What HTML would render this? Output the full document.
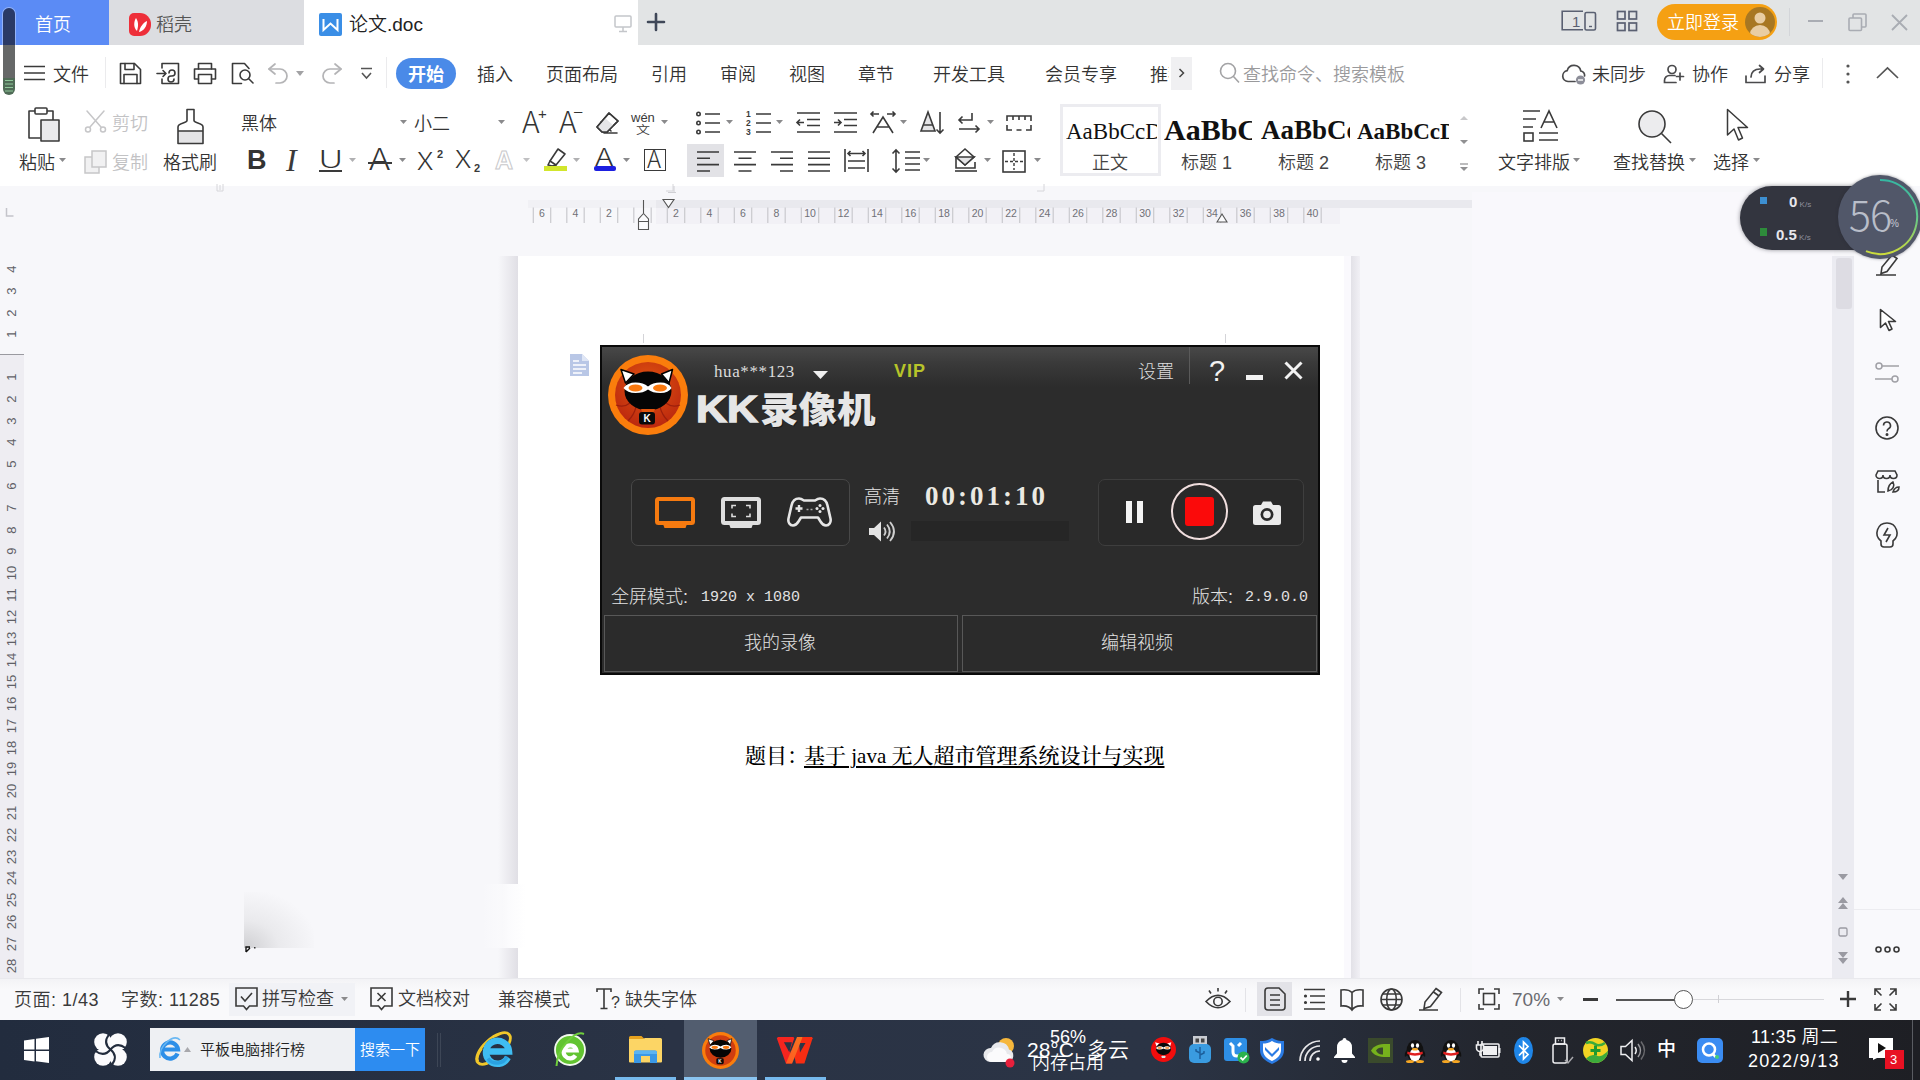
<!DOCTYPE html>
<html lang="zh-CN">
<head>
<meta charset="utf-8">
<title>论文.doc - WPS</title>
<style>
*{box-sizing:border-box;margin:0;padding:0}
html,body{width:1920px;height:1080px;overflow:hidden;background:#f7f7fa}
body{position:relative;font-family:"Liberation Sans","Noto Sans CJK SC",sans-serif;color:#333;font-size:18px;line-height:1;font-weight:350}
.a{position:absolute}
.t{position:absolute;white-space:nowrap;line-height:1}
svg{position:absolute;overflow:visible}
.ic{fill:none;stroke:#3a3a3a;stroke-width:1.6;stroke-linecap:round;stroke-linejoin:round}
/* regions */
#titlebar{left:0;top:0;width:1920px;height:45px;background:#e2e4e5}
#menurow{left:0;top:45px;width:1920px;height:55px;background:#fff}
#ribbon{left:0;top:100px;width:1920px;height:92px;background:#fff}
#docarea{left:0;top:186px;width:1920px;height:792px;background:#f7f7fa}
#statusbar{left:0;top:978px;width:1920px;height:42px;background:linear-gradient(180deg,#f3f3f6,#f9f9fb 25%);border-top:1px solid #e9e9ed}
#taskbar{left:0;top:1020px;width:1920px;height:60px;background:linear-gradient(90deg,#222c3e 0%,#2a3345 35%,#2b3445 60%,#23262e 78%,#1e1f24 100%)}
</style>
</head>
<body>
<div id="titlebar" class="a"></div>
<div id="menurow" class="a"></div>
<div id="ribbon" class="a"></div>
<div id="docarea" class="a"></div>
<div id="statusbar" class="a"></div>
<div id="taskbar" class="a"></div>
<!--TITLEBAR-->
<!-- title bar -->
<div class="a" style="left:0;top:0;width:109px;height:45px;background:#5b8bf5"></div>
<div class="t" style="left:35px;top:16px;font-size:18px;color:#fff">首页</div>
<div class="a" style="left:109px;top:0;width:195px;height:45px;background:#dcdde1"></div>
<div class="a" style="left:129px;top:13px;width:22px;height:23px;background:#ee2f3a;border-radius:5px 11px 11px 5px"></div>
<svg style="left:129px;top:13px" width="22" height="23" viewBox="0 0 22 23"><path d="M8 18 C4 14 5 8 7 5 C9 8 10 12 8 18 Z M10 19 C11 14 14 10 18 8 C18 13 15 18 10 19 Z" fill="#fff"/></svg>
<div class="t" style="left:156px;top:16px;font-size:18px;color:#555">稻壳</div>
<div class="a" style="left:304px;top:0;width:334px;height:46px;background:#fff;border-radius:0 0 0 0"></div>
<div class="a" style="left:319px;top:13px;width:23px;height:23px;background:#3a8ee6;border-radius:2px"></div>
<svg style="left:319px;top:13px" width="23" height="23" viewBox="0 0 23 23"><path d="M4.5 6 L4.5 17 L11.5 10.5 L18.5 17 L18.5 6" fill="none" stroke="#fff" stroke-width="2" stroke-linejoin="miter"/></svg>
<div class="t" style="left:349px;top:15px;font-size:19px;color:#222">论文.doc</div>
<svg style="left:614px;top:15px" width="18" height="18" viewBox="0 0 18 18"><rect x="1" y="1" width="16" height="11" rx="1" fill="none" stroke="#c4c6ca" stroke-width="1.5"/><path d="M9 12v4M5 16.5h8" stroke="#c4c6ca" stroke-width="1.5"/></svg>
<svg style="left:647px;top:13px" width="18" height="18" viewBox="0 0 18 18"><path d="M9 1v16M1 9h16" stroke="#3f4758" stroke-width="2.6" stroke-linecap="round"/></svg>
<svg style="left:1561px;top:10px" width="36" height="22" viewBox="0 0 36 22"><path d="M22 1.2H1.2v18.6H22" fill="none" stroke="#5a6072" stroke-width="1.6"/><rect x="24" y="2.5" width="10.5" height="17.5" rx="1.5" fill="none" stroke="#5a6072" stroke-width="1.6"/><path d="M28 16.5h3" stroke="#5a6072" stroke-width="1.4"/><text x="11" y="16.5" font-size="15" fill="#5a6072" font-family="Liberation Sans, sans-serif">1</text></svg>
<svg style="left:1616px;top:10px" width="22" height="22" viewBox="0 0 22 22" fill="none" stroke="#5a6072" stroke-width="1.7"><rect x="1.5" y="1.5" width="7.5" height="7.5"/><rect x="13" y="1.5" width="7.5" height="7.5"/><rect x="1.5" y="13" width="7.5" height="7.5"/><rect x="13" y="13" width="7.5" height="7.5"/></svg>
<div class="a" style="left:1657px;top:4px;width:120px;height:36px;background:#f5a013;border-radius:18px"></div>
<div class="t" style="left:1667px;top:14px;font-size:18px;color:#fff">立即登录</div>
<svg style="left:1745px;top:7px" width="30" height="30" viewBox="0 0 30 30"><defs><clipPath id="avc"><circle cx="15" cy="15" r="15"/></clipPath></defs><circle cx="15" cy="15" r="15" fill="#a87722"/><g clip-path="url(#avc)" fill="#e9cda3"><circle cx="15" cy="11" r="5.5"/><ellipse cx="15" cy="27" rx="10" ry="9"/></g></svg>
<div class="a" style="left:1789px;top:8px;width:1px;height:28px;background:#d3d5d9"></div>
<div class="a" style="left:1808px;top:20px;width:15px;height:2px;background:#a9acb3"></div>
<svg style="left:1848px;top:13px" width="19" height="19" viewBox="0 0 19 19" fill="none" stroke="#a9acb3" stroke-width="1.6"><rect x="1" y="5" width="12.5" height="12.5" rx="1"/><path d="M5 5V2a1 1 0 0 1 1-1h11a1 1 0 0 1 1 1v11a1 1 0 0 1-1 1h-3"/></svg>
<svg style="left:1891px;top:14px" width="17" height="17" viewBox="0 0 17 17"><path d="M1 1l15 15M16 1L1 16" stroke="#a9acb3" stroke-width="1.8"/></svg>

<!--MENUROW-->
<!-- menu row -->
<svg style="left:24px;top:65px" width="21" height="16" viewBox="0 0 21 16"><path d="M0 1.5h21M0 8h21M0 14.5h21" stroke="#3a3a3a" stroke-width="1.7"/></svg>
<div class="t" style="left:53px;top:66px;font-size:18px;color:#333">文件</div>
<div class="a" style="left:105px;top:57px;width:1px;height:31px;background:#ebebed"></div>
<!-- save -->
<svg class="ic" style="left:119px;top:62px" width="23" height="23" viewBox="0 0 23 23"><path d="M1.5 1.5h14l6 6v14h-20z"/><path d="M6 1.5v6h9v-6M5 21.5v-9h13v9"/></svg>
<!-- export -->
<svg class="ic" style="left:156px;top:62px" width="24" height="23" viewBox="0 0 24 23"><path d="M6 6V1.5h16.5v20H6V17"/><path d="M1 11.5h9M7 8.5l3 3-3 3"/><path d="M13 11a3 3 0 1 1 3 3h-1a3 3 0 1 0 3 3"/></svg>
<!-- print -->
<svg class="ic" style="left:193px;top:62px" width="24" height="23" viewBox="0 0 24 23"><path d="M5.5 7V1.5h13V7"/><path d="M5.5 17H1.5V7h21v10h-4"/><path d="M5.5 12.5h13v9h-13z"/></svg>
<!-- preview -->
<svg class="ic" style="left:231px;top:62px" width="24" height="23" viewBox="0 0 24 23"><path d="M18 6.5 13.5 1.5H1.5v20h9"/><circle cx="14" cy="13" r="5"/><path d="M18 17l4 4"/></svg>
<!-- undo -->
<svg style="left:267px;top:62px" width="24" height="22" viewBox="0 0 24 22" fill="none" stroke="#b4b4b6" stroke-width="1.7" stroke-linecap="round" stroke-linejoin="round"><path d="M8 2 2 7l6 5"/><path d="M2 7h11a7 7 0 0 1 0 14H9"/></svg>
<svg style="left:296px;top:71px" width="8" height="5" viewBox="0 0 8 5"><path d="M0 0h8L4 5z" fill="#a2a2a4"/></svg>
<!-- redo -->
<svg style="left:319px;top:62px" width="24" height="22" viewBox="0 0 24 22" fill="none" stroke="#b4b4b6" stroke-width="1.7" stroke-linecap="round" stroke-linejoin="round"><path d="M16 2l6 5-6 5"/><path d="M22 7H11a7 7 0 0 0 0 14h4"/></svg>
<!-- more -->
<svg style="left:360px;top:67px" width="13" height="13" viewBox="0 0 13 13" fill="none" stroke="#555" stroke-width="1.6"><path d="M1 1.5h11M2 6l4.5 5L11 6"/></svg>
<div class="a" style="left:386px;top:57px;width:1px;height:31px;background:#ebebed"></div>
<div class="a" style="left:396px;top:58px;width:60px;height:31px;background:#4a8ae8;border-radius:16px"></div>
<div class="t" style="left:408px;top:66px;font-size:18px;color:#fff;font-weight:700">开始</div>
<div class="t" style="left:477px;top:66px;font-size:18px">插入</div>
<div class="t" style="left:546px;top:66px;font-size:18px">页面布局</div>
<div class="t" style="left:651px;top:66px;font-size:18px">引用</div>
<div class="t" style="left:720px;top:66px;font-size:18px">审阅</div>
<div class="t" style="left:789px;top:66px;font-size:18px">视图</div>
<div class="t" style="left:858px;top:66px;font-size:18px">章节</div>
<div class="t" style="left:933px;top:66px;font-size:18px">开发工具</div>
<div class="t" style="left:1045px;top:66px;font-size:18px">会员专享</div>
<div class="t" style="left:1150px;top:66px;font-size:18px;width:19px;overflow:hidden">推荐</div>
<div class="a" style="left:1171px;top:57px;width:21px;height:33px;background:#f0f0f2"></div>
<svg style="left:1178px;top:68px" width="7" height="10" viewBox="0 0 7 10"><path d="M1.5 1l4 4-4 4" fill="none" stroke="#444" stroke-width="1.5"/></svg>
<svg style="left:1219px;top:62px" width="22" height="22" viewBox="0 0 22 22" fill="none" stroke="#a3a3a5" stroke-width="1.6"><circle cx="9" cy="9" r="7.5"/><path d="M14.5 14.5 20 20.5"/></svg>
<div class="t" style="left:1243px;top:66px;font-size:18px;color:#9a9a9c">查找命令、搜索模板</div>
<!-- right side of menu -->
<svg style="left:1561px;top:63px" width="26" height="22" viewBox="0 0 26 22"><path d="M14 18.5H7a5.5 5.5 0 0 1-.8-10.9A7 7 0 0 1 19.8 8 4.8 4.8 0 0 1 23.6 13" fill="none" stroke="#4a4a4c" stroke-width="1.7" stroke-linecap="round"/><circle cx="19.5" cy="17" r="4.6" fill="#8d8e99"/><path d="M17 17h5" stroke="#fff" stroke-width="1.4"/></svg>
<div class="t" style="left:1592px;top:66px;font-size:18px">未同步</div>
<svg style="left:1663px;top:64px" width="22" height="20" viewBox="0 0 22 20" fill="none" stroke="#4a4a4c" stroke-width="1.7" stroke-linecap="round"><circle cx="9" cy="5.5" r="4"/><path d="M12 11.5H6.5A5 5 0 0 0 1.5 16.5V18.5H13"/><path d="M17 9v7M13.5 12.5h7"/></svg>
<div class="t" style="left:1692px;top:66px;font-size:18px">协作</div>
<svg style="left:1744px;top:64px" width="23" height="20" viewBox="0 0 23 20" fill="none" stroke="#4a4a4c" stroke-width="1.7" stroke-linecap="round" stroke-linejoin="round"><path d="M2 12v6.5h19V12"/><path d="M7 13c0-5 3.500-8 9-8h3M15.500 1.500 19.500 5l-4 3.500"/></svg>
<div class="t" style="left:1774px;top:66px;font-size:18px">分享</div>
<div class="a" style="left:1822px;top:58px;width:1px;height:30px;background:#ebebed"></div>
<svg style="left:1846px;top:64px" width="4" height="20" viewBox="0 0 4 20" fill="#555"><circle cx="2" cy="2" r="1.6"/><circle cx="2" cy="10" r="1.6"/><circle cx="2" cy="18" r="1.6"/></svg>
<svg style="left:1876px;top:67px" width="23" height="12" viewBox="0 0 23 12"><path d="M1 11 11.5 1 22 11" fill="none" stroke="#555" stroke-width="1.7"/></svg>

<!--RIBBON-->
<!-- ribbon: clipboard -->
<svg class="ic" style="left:27px;top:107px" width="34" height="36" viewBox="0 0 34 36"><path d="M8 4H2v27h11"/><path d="M20 4h6v9"/><rect x="8" y="1" width="12" height="6" rx="1" fill="#fff"/><rect x="14" y="13" width="18" height="21" fill="#e9e9eb"/></svg>
<div class="t" style="left:19px;top:154px;font-size:18px">粘贴</div>
<svg style="left:59px;top:158px" width="7" height="4" viewBox="0 0 7 4"><path d="M0 0h7L3.500 4z" fill="#8a8a8c"/></svg>

<svg style="left:84px;top:110px" width="23" height="23" viewBox="0 0 23 23" fill="none" stroke="#c6c6c8" stroke-width="1.5" stroke-linecap="round"><path d="M3 1l14 16M20 1 6 17"/><circle cx="4" cy="19.500" r="2.500"/><circle cx="19" cy="19.500" r="2.500"/></svg>
<div class="t" style="left:112px;top:115px;font-size:18px;color:#c2c2c4">剪切</div>
<svg style="left:84px;top:150px" width="23" height="24" viewBox="0 0 23 24" fill="#f1f1f2" stroke="#c6c6c8" stroke-width="1.5"><rect x="1" y="7" width="14" height="16"/><rect x="8" y="1" width="14" height="16"/></svg>
<div class="t" style="left:112px;top:154px;font-size:18px;color:#c2c2c4">复制</div>
<svg class="ic" style="left:176px;top:108px" width="29" height="37" viewBox="0 0 29 37"><path d="M2 23h25v12.500H2z" fill="#e4e4e6" stroke="none"/><path d="M11 1.500h7v11c0 3 9 2 9 6.500v16.500H2V19c0-4.500 9-3.500 9-6.500zM2 23h25"/></svg>
<div class="t" style="left:163px;top:154px;font-size:18px">格式刷</div>
<!-- font -->
<div class="t" style="left:241px;top:115px;font-size:18px">黑体</div>
<svg style="left:400px;top:120px" width="7" height="4" viewBox="0 0 7 4"><path d="M0 0h7L3.500 4z" fill="#8a8a8c"/></svg>

<div class="t" style="left:414px;top:115px;font-size:18px">小二</div>
<svg style="left:498px;top:120px" width="7" height="4" viewBox="0 0 7 4"><path d="M0 0h7L3.500 4z" fill="#8a8a8c"/></svg>

<div class="t" style="left:247px;top:147px;font-size:27px;font-weight:700;color:#333;font-family:'Liberation Sans',sans-serif">B</div>
<div class="t" style="left:286px;top:144px;font-size:32px;font-style:italic;color:#3a3a3a;font-family:'Liberation Serif',serif">I</div>
<div class="t" style="left:318px;top:145px;font-size:25px;font-family:'Noto Sans CJK SC',sans-serif;font-weight:300;color:#333;transform:scaleX(1.45);transform-origin:0 0">U</div><div class="a" style="left:319px;top:170px;width:23px;height:1.600px;background:#3a3a3a"></div>
<svg style="left:349px;top:158px" width="7" height="4" viewBox="0 0 7 4"><path d="M0 0h7L3.500 4z" fill="#b0b0b2"/></svg>

<div class="t" style="left:369px;top:142px;font-size:30px;font-family:'Noto Sans CJK SC',sans-serif;font-weight:300;color:#333;transform:scaleX(1.2);transform-origin:0 0">A</div><div class="a" style="left:368px;top:162px;width:24px;height:1.600px;background:#3a3a3a"></div>
<svg style="left:399px;top:158px" width="7" height="4" viewBox="0 0 7 4"><path d="M0 0h7L3.500 4z" fill="#8a8a8c"/></svg>

<div class="t" style="left:417px;top:147px;font-size:25px;font-family:'Noto Sans CJK SC',sans-serif;font-weight:300;color:#333;transform:scaleX(1.2);transform-origin:0 0">X</div><div class="t" style="left:437px;top:149px;font-size:11px;font-weight:700;color:#3a3a3a;font-family:'Liberation Sans',sans-serif">2</div>
<div class="t" style="left:455px;top:145px;font-size:25px;font-family:'Noto Sans CJK SC',sans-serif;font-weight:300;color:#333;transform:scaleX(1.2);transform-origin:0 0">X</div><div class="t" style="left:474px;top:163px;font-size:11px;font-weight:700;color:#3a3a3a;font-family:'Liberation Sans',sans-serif">2</div>
<!-- font row 1 right -->
<div class="t" style="left:522px;top:105px;font-size:30px;font-family:'Noto Sans CJK SC',sans-serif;font-weight:300;color:#333">A</div><div class="t" style="left:538px;top:106px;font-size:15px;color:#333;font-family:'Liberation Sans',sans-serif">+</div>
<div class="t" style="left:559px;top:105px;font-size:30px;font-family:'Noto Sans CJK SC',sans-serif;font-weight:300;color:#333">A</div><div class="t" style="left:574px;top:103px;font-size:15px;color:#333;font-family:'Liberation Sans',sans-serif">–</div>
<svg class="ic" style="left:595px;top:111px" width="25" height="23" viewBox="0 0 25 23"><path d="M14 2 23 10 12 21H7l-5-5z" fill="#fff"/><path d="M6 11l10 9" /><path d="M10 7l9 8-7 6H8l-5-5z" fill="#e6e6e8" stroke="none"/><path d="M14 2 23 10 12 21H7l-5-5zM9 22h13"/></svg>
<div class="t" style="left:631px;top:111px;font-size:13px;font-weight:400;color:#3a3a3a;font-family:'Liberation Sans',sans-serif;letter-spacing:0">wén</div>
<div class="t" style="left:636px;top:124px;font-size:14px;color:#3a3a3a;transform:scaleY(.85);transform-origin:0 0">文</div>
<svg style="left:661px;top:120px" width="7" height="4" viewBox="0 0 7 4"><path d="M0 0h7L3.500 4z" fill="#8a8a8c"/></svg>

<!-- font row 2 right -->
<div class="t" style="left:495px;top:148px;font-size:25px;font-weight:700;color:#fff;-webkit-text-stroke:1px #c9c9cb;font-family:'Liberation Sans',sans-serif">A</div>
<svg style="left:523px;top:158px" width="7" height="4" viewBox="0 0 7 4"><path d="M0 0h7L3.500 4z" fill="#c0c0c2"/></svg>

<svg class="ic" style="left:544px;top:148px" width="24" height="23" viewBox="0 0 24 23"><path d="M14 1l7 5-9 11-6-4z"/><path d="M6 13l-2 4 4 1 4-1"/><rect x="0" y="18" width="23" height="5" fill="#d2e62c" stroke="none"/></svg>
<svg style="left:573px;top:158px" width="7" height="4" viewBox="0 0 7 4"><path d="M0 0h7L3.500 4z" fill="#b0b0b2"/></svg>

<div class="t" style="left:595px;top:144px;transform:scaleX(1.3);transform-origin:0 0;font-size:24px;font-family:'Noto Sans CJK SC',sans-serif;font-weight:300;color:#333">A</div><div class="a" style="left:594px;top:166px;width:22px;height:4.500px;background:#1d1fe0;border-radius:2px"></div>
<svg style="left:623px;top:158px" width="7" height="4" viewBox="0 0 7 4"><path d="M0 0h7L3.500 4z" fill="#8a8a8c"/></svg>

<div class="a" style="left:644px;top:149px;width:22px;height:22px;border:1.500px solid #3a3a3a"></div><div class="t" style="left:647px;top:146px;font-size:24px;font-family:'Noto Sans CJK SC',sans-serif;font-weight:300;color:#333">A</div>


<!-- paragraph row 1 -->
<svg style="left:696px;top:111px" width="25" height="24" viewBox="0 0 25 24" fill="none" stroke="#3a3a3a" stroke-width="1.600"><circle cx="2.500" cy="3" r="1.700"/><circle cx="2.500" cy="12" r="1.700"/><circle cx="2.500" cy="21" r="1.700"/><path d="M9 3h15M9 12h15M9 21h15"/></svg>
<svg style="left:726px;top:120px" width="7" height="4" viewBox="0 0 7 4"><path d="M0 0h7L3.500 4z" fill="#8a8a8c"/></svg>

<svg style="left:746px;top:109px" width="25" height="27" viewBox="0 0 25 27"><path d="M10 5h15M10 14h15M10 23h15" fill="none" stroke="#3a3a3a" stroke-width="1.600"/><text x="0" y="8" font-size="8.500" font-weight="700" fill="#3a3a3a" font-family="Liberation Sans, sans-serif">1</text><text x="0" y="17" font-size="8.500" font-weight="700" fill="#3a3a3a" font-family="Liberation Sans, sans-serif">2</text><text x="0" y="26" font-size="8.500" font-weight="700" fill="#3a3a3a" font-family="Liberation Sans, sans-serif">3</text></svg>
<svg style="left:776px;top:120px" width="7" height="4" viewBox="0 0 7 4"><path d="M0 0h7L3.500 4z" fill="#8a8a8c"/></svg>

<svg style="left:796px;top:112px" width="25" height="21" viewBox="0 0 25 21" fill="none" stroke="#3a3a3a" stroke-width="1.600"><path d="M1 1h23M11 7.500h13M11 13.500h13M1 20h23M8 10.500H1M4 7.500l-3 3 3 3"/></svg>
<svg style="left:833px;top:112px" width="25" height="21" viewBox="0 0 25 21" fill="none" stroke="#3a3a3a" stroke-width="1.600"><path d="M1 1h23M11 7.500h13M11 13.500h13M1 20h23M1 10.500h7M5 7.500l3 3-3 3"/></svg>
<svg style="left:870px;top:111px" width="26" height="23" viewBox="0 0 26 23" fill="none" stroke="#3a3a3a" stroke-width="1.600"><path d="M1 3h8M3.500 .500 1 3l2.500 2.500M25 3h-8M22.500 .500 25 3l-2.500 2.500M3 22 13 6l10 16M7 16h12"/></svg>
<svg style="left:900px;top:120px" width="7" height="4" viewBox="0 0 7 4"><path d="M0 0h7L3.500 4z" fill="#8a8a8c"/></svg>

<svg style="left:920px;top:111px" width="25" height="24" viewBox="0 0 25 24" fill="none" stroke="#3a3a3a" stroke-width="1.600"><path d="M1 20 8 1l7 19z" fill="#e4e4e6"/><path d="M3.500 14h9M20 1v21M16.500 18.500 20 22l3.500-3.500"/></svg>
<svg style="left:958px;top:112px" width="23" height="22" viewBox="0 0 23 22" fill="none" stroke="#3a3a3a" stroke-width="1.600"><path d="M14 1v7H1M4.500 4.500 1 8l3.500 3.500M1 17h20M17.500 13.500 21 17l-3.500 3.500"/></svg>
<svg style="left:987px;top:120px" width="7" height="4" viewBox="0 0 7 4"><path d="M0 0h7L3.500 4z" fill="#8a8a8c"/></svg>

<svg style="left:1006px;top:115px" width="26" height="16" viewBox="0 0 26 16" fill="none" stroke="#3a3a3a" stroke-width="1.600"><path d="M1 6V1h24v5M7 1v4M13 1v4M19 1v4M1 10v5h5M10.500 15h5M20 15h5v-5"/></svg>
<!-- paragraph row 2 -->
<div class="a" style="left:687px;top:144px;width:37px;height:33px;background:#e2e2e6"></div>
<svg style="left:697px;top:151px" width="22" height="21" viewBox="0 0 22 21" fill="none" stroke="#3a3a3a" stroke-width="1.600"><path d="M0 1h22M0 7.300h13M0 13.600h22M0 20h13"/></svg>
<svg style="left:734px;top:151px" width="22" height="21" viewBox="0 0 22 21" fill="none" stroke="#3a3a3a" stroke-width="1.600"><path d="M0 1h22M4.500 7.300h13M0 13.600h22M4.500 20h13"/></svg>
<svg style="left:771px;top:151px" width="22" height="21" viewBox="0 0 22 21" fill="none" stroke="#3a3a3a" stroke-width="1.600"><path d="M0 1h22M9 7.300h13M0 13.600h22M9 20h13"/></svg>
<svg style="left:808px;top:151px" width="22" height="21" viewBox="0 0 22 21" fill="none" stroke="#3a3a3a" stroke-width="1.600"><path d="M0 1h22M0 7.300h22M0 13.600h22M0 20h22"/></svg>
<svg style="left:844px;top:149px" width="25" height="23" viewBox="0 0 25 23" fill="none" stroke="#3a3a3a" stroke-width="1.600"><path d="M1 0v23M24 0v23M4 4.500h17M6.500 2 4 4.500 6.500 7M18.500 2 21 4.500 18.500 7M4 12h17M4 19h17"/></svg>
<svg style="left:891px;top:149px" width="30" height="24" viewBox="0 0 30 24" fill="none" stroke="#3a3a3a" stroke-width="1.600"><path d="M5 1v22M1.500 4.500 5 1l3.500 3.500M1.500 19.500 5 23l3.500-3.500M14 3h15M14 9h15M14 15h15M14 21h15"/></svg>
<svg style="left:923px;top:158px" width="7" height="4" viewBox="0 0 7 4"><path d="M0 0h7L3.500 4z" fill="#8a8a8c"/></svg>

<svg style="left:953px;top:148px" width="25" height="24" viewBox="0 0 25 24" fill="none" stroke="#3a3a3a" stroke-width="1.600"><path d="M3 9 12 1l9 8-9 8z" fill="#fff"/><path d="M3 9h18l-9 8z" fill="#e4e4e6"/><path d="M3 9v11h19v-6"/><path d="M2 23h22" /></svg>
<svg style="left:984px;top:158px" width="7" height="4" viewBox="0 0 7 4"><path d="M0 0h7L3.500 4z" fill="#8a8a8c"/></svg>

<svg style="left:1002px;top:150px" width="24" height="23" viewBox="0 0 24 23" fill="none" stroke="#3a3a3a"><rect x="1" y="1" width="22" height="21" stroke-width="1.600"/><path d="M12 3v17M3 11.500h18" stroke-width="1.400" stroke-dasharray="3 2"/></svg>
<svg style="left:1034px;top:158px" width="7" height="4" viewBox="0 0 7 4"><path d="M0 0h7L3.500 4z" fill="#8a8a8c"/></svg>

<!-- style gallery -->
<div class="a" style="left:1060px;top:104px;width:101px;height:72px;border:3px solid #ececf0;background:#fff"></div>
<div class="t" style="left:1066px;top:120px;font-size:23px;color:#111;font-family:'Liberation Serif',serif;width:91px;overflow:hidden">AaBbCcDd</div>
<div class="t" style="left:1092px;top:154px;font-size:18px;color:#444">正文</div>
<div class="t" style="left:1164px;top:115px;font-size:30px;font-weight:700;color:#111;font-family:'Liberation Serif',serif;width:88px;overflow:hidden">AaBbCc</div>
<div class="t" style="left:1181px;top:154px;font-size:18px;color:#444">标题 1</div>
<div class="t" style="left:1261px;top:117px;font-size:27px;font-weight:700;color:#111;font-family:'Liberation Serif',serif;width:89px;overflow:hidden">AaBbCc</div>
<div class="t" style="left:1278px;top:154px;font-size:18px;color:#444">标题 2</div>
<div class="t" style="left:1357px;top:120px;font-size:23px;font-weight:700;color:#111;font-family:'Liberation Serif',serif;width:92px;overflow:hidden">AaBbCcD</div>
<div class="t" style="left:1375px;top:154px;font-size:18px;color:#444">标题 3</div>
<svg style="left:1460px;top:116px" width="8" height="4" viewBox="0 0 8 4"><path d="M0 4h8L4 0z" fill="#c8c8ca"/></svg>
<svg style="left:1460px;top:140px" width="8" height="4" viewBox="0 0 8 4"><path d="M0 0h8L4 4z" fill="#909092"/></svg>
<svg style="left:1460px;top:163px" width="8" height="8" viewBox="0 0 8 8"><path d="M0 1h8" stroke="#909092" stroke-width="1.200"/><path d="M0 4h8L4 8z" fill="#909092"/></svg>
<!-- right tools -->
<svg style="left:1523px;top:110px" width="36" height="32" viewBox="0 0 36 32" fill="none" stroke="#3a3a3a" stroke-width="1.600"><path d="M0 1h17M0 9h13M0 17h10M18 18 26 1l8 17M21 12h10M16 23h19M16 30h19"/><rect x="1" y="23" width="9" height="8"/></svg>
<div class="t" style="left:1498px;top:154px;font-size:18px">文字排版</div>
<svg style="left:1573px;top:158px" width="7" height="4" viewBox="0 0 7 4"><path d="M0 0h7L3.500 4z" fill="#8a8a8c"/></svg>

<svg style="left:1638px;top:110px" width="35" height="34" viewBox="0 0 35 34" fill="none" stroke="#3a3a3a" stroke-width="1.600"><circle cx="14" cy="14" r="13" fill="#ececee"/><path d="M23.500 23.500 33 33"/></svg>
<div class="t" style="left:1613px;top:154px;font-size:18px">查找替换</div>
<svg style="left:1689px;top:158px" width="7" height="4" viewBox="0 0 7 4"><path d="M0 0h7L3.500 4z" fill="#8a8a8c"/></svg>

<svg style="left:1726px;top:108px" width="25" height="35" viewBox="0 0 25 35" fill="#fff" stroke="#3a3a3a" stroke-width="1.500" stroke-linejoin="round"><path d="M1.500 1.500V27l6.500-6 4.500 11 4-2-4.500-10.500H21.500z"/></svg>
<div class="t" style="left:1713px;top:154px;font-size:18px">选择</div>
<svg style="left:1753px;top:158px" width="7" height="4" viewBox="0 0 7 4"><path d="M0 0h7L3.500 4z" fill="#8a8a8c"/></svg>

<!-- tiny group markers -->
<svg style="left:216px;top:184px" width="8" height="8" viewBox="0 0 8 8"><path d="M1 0v7h6V0M4 1v5" fill="none" stroke="#d6d6da" stroke-width="1"/></svg>
<svg style="left:666px;top:184px" width="8" height="8" viewBox="0 0 8 8"><path d="M7 0v7H0" fill="none" stroke="#d6d6da" stroke-width="1"/></svg>
<svg style="left:1037px;top:184px" width="8" height="8" viewBox="0 0 8 8"><path d="M7 0v7H0" fill="none" stroke="#d6d6da" stroke-width="1"/></svg>
<!--DOC-->
<!-- horizontal ruler -->
<div class="a" style="left:1472px;top:192px;width:362px;height:786px;background:#f9f8fc"></div>
<div class="a" style="left:528px;top:200px;width:128px;height:8px;background:#f1f1f5"></div><div class="a" style="left:656px;top:200px;width:816px;height:8px;background:#e9e9ee"></div>
<div class="a" style="left:656px;top:208px;width:684px;height:16px;background:#f2f1f6"></div>
<svg style="left:0;top:186px" width="1920" height="60" viewBox="0 186 1920 60">
<g stroke="#c9c9ce" stroke-width="1.2">
<path d="M533.3 207.500V223"/><path d="M550.7 207.500V223"/><path d="M566.8 207.500V223"/><path d="M584.2 207.500V223"/><path d="M600.3 207.500V223"/><path d="M617.7 207.500V223"/><path d="M633.8 207.500V223"/><path d="M651.2 207.500V223"/><path d="M667.3 207.500V223"/><path d="M684.7 207.500V223"/><path d="M700.8 207.500V223"/><path d="M718.2 207.500V223"/><path d="M734.3 207.500V223"/><path d="M751.7 207.500V223"/><path d="M767.8 207.500V223"/><path d="M785.2 207.500V223"/><path d="M801.3 207.500V223"/><path d="M818.7 207.500V223"/><path d="M834.8 207.500V223"/><path d="M852.2 207.500V223"/><path d="M868.3 207.500V223"/><path d="M885.7 207.500V223"/><path d="M901.8 207.500V223"/><path d="M919.2 207.500V223"/><path d="M935.3 207.500V223"/><path d="M952.7 207.500V223"/><path d="M968.8 207.500V223"/><path d="M986.2 207.500V223"/><path d="M1002.3 207.500V223"/><path d="M1019.7 207.500V223"/><path d="M1035.8 207.500V223"/><path d="M1053.2 207.500V223"/><path d="M1069.3 207.500V223"/><path d="M1086.7 207.500V223"/><path d="M1102.8 207.500V223"/><path d="M1120.2 207.500V223"/><path d="M1136.3 207.500V223"/><path d="M1153.7 207.500V223"/><path d="M1169.8 207.500V223"/><path d="M1187.2 207.500V223"/><path d="M1203.3 207.500V223"/><path d="M1220.7 207.500V223"/><path d="M1236.8 207.500V223"/><path d="M1254.2 207.500V223"/><path d="M1270.3 207.500V223"/><path d="M1287.7 207.500V223"/><path d="M1303.8 207.500V223"/><path d="M1321.2 207.500V223"/></g>
<g font-size="10.500" fill="#707076" font-family="Liberation Sans, sans-serif" text-anchor="middle"><text x="542.0" y="217">6</text><text x="575.5" y="217">4</text><text x="609.0" y="217">2</text><text x="676.0" y="217">2</text><text x="709.5" y="217">4</text><text x="743.0" y="217">6</text><text x="776.5" y="217">8</text><text x="810.0" y="217">10</text><text x="843.5" y="217">12</text><text x="877.0" y="217">14</text><text x="910.5" y="217">16</text><text x="944.0" y="217">18</text><text x="977.5" y="217">20</text><text x="1011.0" y="217">22</text><text x="1044.5" y="217">24</text><text x="1078.0" y="217">26</text><text x="1111.5" y="217">28</text><text x="1145.0" y="217">30</text><text x="1178.5" y="217">32</text><text x="1212.0" y="217">34</text><text x="1245.5" y="217">36</text><text x="1279.0" y="217">38</text><text x="1312.5" y="217">40</text></g>
<g fill="#fbfbfd" stroke="#555" stroke-width="1.1">
<path d="M643.500 200v13"/><path d="M638.500 229.500v-10.500l5-5.500 5 5.500v10.500zM638.500 221.500h10"/>
<path d="M663 199.500h11l-5.500 8z"/>
<path d="M1217 222l5-8 5 8z"/>
</g>
<path d="M674 186v6M668 192.500h8" stroke="#d0d0d4" stroke-width="1"/>
<path d="M6.500 208v8h7" fill="none" stroke="#c4c4ca" stroke-width="1.500"/>
</svg>
<!-- vertical ruler -->

<div class="a" style="left:0;top:355px;width:24px;height:623px;background:#eeedf2"></div>
<div class="a" style="left:0;top:354px;width:24px;height:1px;background:#9a9aa0"></div>
<div class="t" style="left:0;top:262.0px;width:24px;height:14px;line-height:14px;text-align:center;font-size:13px;color:#606066;transform:rotate(-90deg)">4</div><div class="t" style="left:0;top:283.8px;width:24px;height:14px;line-height:14px;text-align:center;font-size:13px;color:#606066;transform:rotate(-90deg)">3</div><div class="t" style="left:0;top:305.6px;width:24px;height:14px;line-height:14px;text-align:center;font-size:13px;color:#606066;transform:rotate(-90deg)">2</div><div class="t" style="left:0;top:327.4px;width:24px;height:14px;line-height:14px;text-align:center;font-size:13px;color:#606066;transform:rotate(-90deg)">1</div><div class="t" style="left:0;top:370.0px;width:24px;height:14px;line-height:14px;text-align:center;font-size:13px;color:#606066;transform:rotate(-90deg)">1</div><div class="t" style="left:0;top:391.8px;width:24px;height:14px;line-height:14px;text-align:center;font-size:13px;color:#606066;transform:rotate(-90deg)">2</div><div class="t" style="left:0;top:413.6px;width:24px;height:14px;line-height:14px;text-align:center;font-size:13px;color:#606066;transform:rotate(-90deg)">3</div><div class="t" style="left:0;top:435.4px;width:24px;height:14px;line-height:14px;text-align:center;font-size:13px;color:#606066;transform:rotate(-90deg)">4</div><div class="t" style="left:0;top:457.2px;width:24px;height:14px;line-height:14px;text-align:center;font-size:13px;color:#606066;transform:rotate(-90deg)">5</div><div class="t" style="left:0;top:479.0px;width:24px;height:14px;line-height:14px;text-align:center;font-size:13px;color:#606066;transform:rotate(-90deg)">6</div><div class="t" style="left:0;top:500.8px;width:24px;height:14px;line-height:14px;text-align:center;font-size:13px;color:#606066;transform:rotate(-90deg)">7</div><div class="t" style="left:0;top:522.6px;width:24px;height:14px;line-height:14px;text-align:center;font-size:13px;color:#606066;transform:rotate(-90deg)">8</div><div class="t" style="left:0;top:544.4px;width:24px;height:14px;line-height:14px;text-align:center;font-size:13px;color:#606066;transform:rotate(-90deg)">9</div><div class="t" style="left:0;top:566.2px;width:24px;height:14px;line-height:14px;text-align:center;font-size:13px;color:#606066;transform:rotate(-90deg)">10</div><div class="t" style="left:0;top:588.0px;width:24px;height:14px;line-height:14px;text-align:center;font-size:13px;color:#606066;transform:rotate(-90deg)">11</div><div class="t" style="left:0;top:609.8px;width:24px;height:14px;line-height:14px;text-align:center;font-size:13px;color:#606066;transform:rotate(-90deg)">12</div><div class="t" style="left:0;top:631.6px;width:24px;height:14px;line-height:14px;text-align:center;font-size:13px;color:#606066;transform:rotate(-90deg)">13</div><div class="t" style="left:0;top:653.4px;width:24px;height:14px;line-height:14px;text-align:center;font-size:13px;color:#606066;transform:rotate(-90deg)">14</div><div class="t" style="left:0;top:675.2px;width:24px;height:14px;line-height:14px;text-align:center;font-size:13px;color:#606066;transform:rotate(-90deg)">15</div><div class="t" style="left:0;top:697.0px;width:24px;height:14px;line-height:14px;text-align:center;font-size:13px;color:#606066;transform:rotate(-90deg)">16</div><div class="t" style="left:0;top:718.8px;width:24px;height:14px;line-height:14px;text-align:center;font-size:13px;color:#606066;transform:rotate(-90deg)">17</div><div class="t" style="left:0;top:740.6px;width:24px;height:14px;line-height:14px;text-align:center;font-size:13px;color:#606066;transform:rotate(-90deg)">18</div><div class="t" style="left:0;top:762.4px;width:24px;height:14px;line-height:14px;text-align:center;font-size:13px;color:#606066;transform:rotate(-90deg)">19</div><div class="t" style="left:0;top:784.2px;width:24px;height:14px;line-height:14px;text-align:center;font-size:13px;color:#606066;transform:rotate(-90deg)">20</div><div class="t" style="left:0;top:806.0px;width:24px;height:14px;line-height:14px;text-align:center;font-size:13px;color:#606066;transform:rotate(-90deg)">21</div><div class="t" style="left:0;top:827.8px;width:24px;height:14px;line-height:14px;text-align:center;font-size:13px;color:#606066;transform:rotate(-90deg)">22</div><div class="t" style="left:0;top:849.6px;width:24px;height:14px;line-height:14px;text-align:center;font-size:13px;color:#606066;transform:rotate(-90deg)">23</div><div class="t" style="left:0;top:871.4px;width:24px;height:14px;line-height:14px;text-align:center;font-size:13px;color:#606066;transform:rotate(-90deg)">24</div><div class="t" style="left:0;top:893.2px;width:24px;height:14px;line-height:14px;text-align:center;font-size:13px;color:#606066;transform:rotate(-90deg)">25</div><div class="t" style="left:0;top:915.0px;width:24px;height:14px;line-height:14px;text-align:center;font-size:13px;color:#606066;transform:rotate(-90deg)">26</div><div class="t" style="left:0;top:936.8px;width:24px;height:14px;line-height:14px;text-align:center;font-size:13px;color:#606066;transform:rotate(-90deg)">27</div><div class="t" style="left:0;top:958.6px;width:24px;height:14px;line-height:14px;text-align:center;font-size:13px;color:#606066;transform:rotate(-90deg)">28</div>
<!-- page -->
<div class="a" style="left:498px;top:256px;width:20px;height:722px;background:linear-gradient(90deg,rgba(230,229,236,0),#e0dfe5)"></div>
<div class="a" style="left:518px;top:256px;width:833px;height:722px;background:#fff"></div>
<div class="a" style="left:1344px;top:256px;width:8px;height:722px;background:#faf9fd"></div>
<div class="a" style="left:1351px;top:256px;width:9px;height:722px;background:linear-gradient(90deg,#e2e1e7,#f1f0f5)"></div>
<!-- margin corner marks -->
<div class="a" style="left:643px;top:334px;width:1px;height:9px;background:#d4d4d8"></div>
<div class="a" style="left:1225px;top:334px;width:1px;height:9px;background:#d4d4d8"></div>
<!-- paragraph icon -->
<svg style="left:570px;top:354px" width="19" height="22" viewBox="0 0 19 22"><path d="M0 0h12l7 7v15H0z" fill="#b9c7e6"/><path d="M12 0v7h7" fill="#dfe6f5"/><path d="M3 7h6M3 11h13M3 15h13M3 19h9" stroke="#fff" stroke-width="1.600"/></svg>
<!-- doc text -->
<div class="t" style="left:745px;top:746px;font-size:21px;color:#000;font-weight:500;font-family:'Liberation Serif','Noto Serif CJK SC',serif">题目：</div>
<div class="t" style="left:804px;top:746px;font-size:21px;color:#000;font-weight:500;font-family:'Liberation Serif','Noto Serif CJK SC',serif;text-decoration:underline;text-underline-offset:3px;text-decoration-thickness:1.500px">基于 java 无人超市管理系统设计与实现</div>
<!-- blurred patch -->
<div class="a" style="left:244px;top:892px;width:70px;height:56px;background:radial-gradient(ellipse at 0% 100%,rgba(205,205,208,.95) 0,rgba(225,225,228,.6) 35%,rgba(246,246,250,0) 75%)"></div>
<div class="a" style="left:482px;top:884px;width:58px;height:64px;background:linear-gradient(90deg,rgba(255,255,255,0),#fbfbfd 45%,#fff 75%)"></div>
<svg style="left:245px;top:946px" width="12" height="7" viewBox="0 0 12 7"><path d="M1 6V1h4M1 6l4-4" stroke="#111" stroke-width="1.400" fill="none"/><rect x="9" y="1" width="1.500" height="1.500" fill="#333"/></svg>

<!--KK-->
<!-- KK recorder window -->
<div class="a" id="kk" style="left:600px;top:345px;width:720px;height:330px;background:#2c2c2c;border:2px solid #0a0a0a;overflow:hidden;font-family:'Liberation Sans','Noto Sans CJK SC',sans-serif">
<div class="a" style="left:0;top:0;width:716px;height:40px;background:linear-gradient(180deg,#484848,#3a3a3a 40%,#2c2c2c)"></div>
</div>
<svg style="left:608px;top:355px" width="80" height="80" viewBox="0 0 80 80">
<defs><radialGradient id="kkg" cx="50%" cy="35%" r="70%"><stop offset="0" stop-color="#e2560f"/><stop offset="1" stop-color="#b8240f"/></radialGradient></defs>
<circle cx="40" cy="40" r="40" fill="#fa7d0c"/><circle cx="40" cy="40" r="33" fill="url(#kkg)"/>
<path d="M8 50q8 3 14-2M72 50q-8 3-14-2M20 66q6-6 8-14M60 66q-6-6-8-14" stroke="#9c1f0c" stroke-width="1.200" fill="none"/>
<path d="M13 14.500 26 19 17.500 28z" fill="#fff" stroke="#000" stroke-width="1.500" stroke-linejoin="round"/>
<path d="M64.500 14.500 53.500 19 61 28z" fill="#fff" stroke="#000" stroke-width="1.500" stroke-linejoin="round"/>
<ellipse cx="40" cy="36" rx="23.500" ry="19.500" fill="#050505"/>
<path d="M15.500 33q4-5.500 12-5.500 8 0 12.500 4 4.500-4 12.500-4 8 0 11 5.500-3 5-11 5-8 0-12.500-3.500-4.500 3.500-12.500 3.500-8 0-12-5z" fill="#fff"/>
<ellipse cx="27.500" cy="33" rx="7" ry="3.500" fill="#f9780e"/><ellipse cx="52" cy="33" rx="7" ry="3.500" fill="#f9780e"/>
<path d="M33 54h14l-2 5h-10z" fill="#e2560f"/>
<rect x="31" y="57" width="16" height="12.500" rx="3" fill="#0a0a0a"/>
<text x="39" y="67" font-size="10" font-weight="700" fill="#fff" text-anchor="middle" font-family="Liberation Sans, sans-serif">K</text>
</svg>
<div class="t" style="left:714px;top:363px;font-size:17px;color:#dcdcdc;font-family:'Liberation Serif',serif;letter-spacing:.600px">hua***123</div>
<svg style="left:813px;top:371px" width="15" height="8" viewBox="0 0 15 8"><path d="M0 0h15L7.500 8z" fill="#f0f0f0"/></svg>
<div class="t" style="left:894px;top:362px;font-size:18px;font-weight:700;color:#b7c42a;font-family:'Liberation Sans',sans-serif;letter-spacing:1px">VIP</div>
<div class="t" id="kktitle" style="left:696px;top:392px;transform:scaleX(1.19);transform-origin:0 0;font-size:36px;font-weight:700;color:#e6e6e6;font-family:'Liberation Sans',sans-serif;text-shadow:1px 1px 0 #1a1a1a;-webkit-text-stroke:1.300px #e6e6e6">KK</div>
<div class="t" id="kktitle2" style="left:760px;top:389px;transform:scaleX(1.07);transform-origin:0 0;font-size:36px;font-weight:900;color:#e6e6e6;font-family:'Noto Sans CJK SC',sans-serif;text-shadow:1px 1px 0 #1a1a1a">录像机</div>
<div class="t" style="left:1138px;top:363px;font-size:18px;color:#dcdcdc;font-weight:300">设置</div>
<div class="a" style="left:1189px;top:347px;width:1px;height:37px;background:#5a5a5a"></div>
<div class="t" style="left:1209px;top:357px;font-size:29px;color:#f2f2f2;font-family:'Liberation Sans',sans-serif">?</div>
<div class="a" style="left:1246px;top:375px;width:17px;height:5px;background:#f2f2f2"></div>
<svg style="left:1284px;top:361px" width="19" height="19" viewBox="0 0 19 19"><path d="M1.500 1.500l16 16M17.500 1.500l-16 16" stroke="#f2f2f2" stroke-width="3"/></svg>
<!-- mode panel -->
<div class="a" style="left:631px;top:479px;width:219px;height:67px;background:#292929;border:1px solid #484848;border-radius:7px"></div>
<svg style="left:655px;top:497px" width="40" height="32" viewBox="0 0 40 32"><rect x="2" y="2" width="36" height="24" rx="1.500" fill="none" stroke="#f57a10" stroke-width="4"/><path d="M8 27h24l-1.500 4h-21z" fill="#f57a10"/></svg>
<svg style="left:721px;top:497px" width="40" height="32" viewBox="0 0 40 32"><rect x="2" y="2" width="36" height="24" rx="1.500" fill="none" stroke="#dedede" stroke-width="4"/><path d="M8 27h24l-1.500 4h-21z" fill="#dedede"/><path d="M11 11.500V8.500h4M25 8.500h4v3M11 16.500v3h4M25 19.500h4v-3" fill="none" stroke="#dedede" stroke-width="1.600"/></svg>
<svg style="left:786px;top:496px" width="47" height="32" viewBox="0 0 47 32"><path d="M13 2.500c-4 0-6.500 2.500-7.500 7l-3 13c-.8 4 1.500 7 4.500 7 2.500 0 4-1.500 5.500-4l2.500-4h17l2.500 4c1.500 2.500 3 4 5.500 4 3 0 5.300-3 4.500-7l-3-13c-1-4.500-3.500-7-7.500-7-2 0-3.500 1-5 2h-11c-1.500-1-3-2-5-2z" fill="none" stroke="#e6e6e6" stroke-width="2.600" stroke-linejoin="round"/><path d="M13 9v7M9.500 12.500h7" stroke="#e6e6e6" stroke-width="2.400"/><circle cx="34" cy="9.500" r="1.500" fill="#e6e6e6"/><circle cx="34" cy="15.500" r="1.500" fill="#e6e6e6"/><circle cx="31" cy="12.500" r="1.500" fill="#e6e6e6"/><circle cx="37" cy="12.500" r="1.500" fill="#e6e6e6"/><path d="M20.500 13.500h2M24.500 13.500h2" stroke="#aaa" stroke-width="1.400"/></svg>
<div class="t" style="left:864px;top:488px;font-size:18px;color:#e2e2e2;font-weight:300">高清</div>
<svg style="left:868px;top:521px" width="27" height="21" viewBox="0 0 27 21"><path d="M1 7h5l7-6.500v20L6 14H1z" fill="#e4e4e4"/><path d="M16 6.500q3 4 0 8M19 3.500q5.500 7 0 14M22 1q8 9.500 0 19" fill="none" stroke="#cfcfcf" stroke-width="1.800"/></svg>
<div class="a" style="left:911px;top:521px;width:158px;height:20px;background:#262626"></div>
<div class="t" id="kktimer" style="left:925px;top:483px;font-size:27px;font-weight:700;color:#ebe9e2;font-family:'Liberation Serif',serif;letter-spacing:3px">00:01:10</div>
<!-- control panel -->
<div class="a" style="left:1098px;top:479px;width:206px;height:67px;background:#292929;border:1px solid #3e3e3e;border-radius:7px"></div>
<div class="a" style="left:1126px;top:501px;width:6px;height:22px;background:#f4f4f4"></div>
<div class="a" style="left:1137px;top:501px;width:6px;height:22px;background:#f4f4f4"></div>
<div class="a" style="left:1171px;top:483px;width:57px;height:57px;border:2.500px solid #f0dede;border-radius:50%"></div>
<div class="a" style="left:1185px;top:497px;width:29px;height:29px;background:#fb0a0a;border-radius:3px"></div>
<svg style="left:1253px;top:501px" width="28" height="24" viewBox="0 0 28 24"><path d="M8 4l2-3.500h8L20 4h5.500A2.500 2.500 0 0 1 28 6.500v15a2.500 2.500 0 0 1-2.500 2.500h-23A2.500 2.500 0 0 1 0 21.500v-15A2.500 2.500 0 0 1 2.500 4z" fill="#eaeaea"/><circle cx="14" cy="13.500" r="6.500" fill="#2a2a2a"/><circle cx="14" cy="13.500" r="3.800" fill="#eaeaea"/></svg>
<!-- info -->
<div class="t" style="left:611px;top:588px;font-size:18px;color:#e2e2e2;font-weight:300">全屏模式:</div>
<div class="t" style="left:701px;top:590px;font-size:15px;color:#e2e2e2;font-family:'Liberation Mono',monospace">1920 x 1080</div>
<div class="t" style="left:1192px;top:588px;font-size:18px;color:#e2e2e2;font-weight:300">版本:</div>
<div class="t" style="left:1245px;top:590px;font-size:15px;color:#e2e2e2;font-family:'Liberation Mono',monospace">2.9.0.0</div>
<div class="a" style="left:604px;top:615px;width:354px;height:57px;background:#2b2b2b;border:1px solid #585858"></div>
<div class="a" style="left:962px;top:615px;width:355px;height:57px;background:#2b2b2b;border:1px solid #585858"></div>
<div class="t" style="left:744px;top:634px;font-size:18px;color:#e2e2e2;font-weight:300">我的录像</div>
<div class="t" style="left:1101px;top:634px;font-size:18px;color:#e2e2e2;font-weight:300">编辑视频</div>

<!--SIDE-->
<!-- right side panel + scrollbar -->
<div class="a" style="left:1832px;top:256px;width:23px;height:722px;background:#ebebf1"></div>
<div class="a" style="left:1854px;top:186px;width:66px;height:792px;background:#f9f9fc"></div>
<div class="a" style="left:1836px;top:258px;width:16px;height:51px;background:#dddce3;border-radius:3px"></div>
<svg style="left:1838px;top:874px" width="10" height="6" viewBox="0 0 10 6"><path d="M0 0h10L5 6z" fill="#9a9aa2"/></svg>
<svg style="left:1838px;top:897px" width="10" height="12" viewBox="0 0 10 12"><path d="M0 6h10L5 0zM0 12h10L5 6z" fill="#9a9aa2"/></svg>
<svg style="left:1838px;top:927px" width="10" height="10" viewBox="0 0 10 10"><rect x="1" y="1" width="8" height="8" rx="1.500" fill="none" stroke="#9a9aa2" stroke-width="1.300"/></svg>
<svg style="left:1838px;top:952px" width="10" height="12" viewBox="0 0 10 12"><path d="M0 0h10L5 6zM0 6h10L5 12z" fill="#9a9aa2"/></svg>
<div class="a" style="left:1854px;top:909px;width:66px;height:1px;background:#ececf0"></div>
<svg style="left:1876px;top:254px" width="24" height="22" viewBox="0 0 24 22" fill="none" stroke="#3a3a3a" stroke-width="1.600"><path d="M16 1l5 3.500-10 13-6 2 1-6.500zM0 21h20"/></svg>
<svg style="left:1879px;top:308px" width="19" height="24" viewBox="0 0 19 24" fill="#fff" stroke="#3a3a3a" stroke-width="1.600" stroke-linejoin="round"><path d="M1.500 1.500v18l5-4.500 3.500 7.500 3-1.500-3.500-7.500h7z"/></svg>
<svg style="left:1875px;top:361px" width="25" height="24" viewBox="0 0 25 24" fill="none" stroke="#a0a0a6" stroke-width="1.500"><circle cx="4" cy="5" r="3"/><path d="M7 5h17"/><circle cx="20" cy="18" r="3"/><path d="M0 18h17"/></svg>
<svg style="left:1875px;top:416px" width="24" height="24" viewBox="0 0 24 24" fill="none" stroke="#3a3a3a" stroke-width="1.600"><circle cx="12" cy="12" r="11"/><path d="M8.500 9.500a3.500 3.500 0 1 1 5 3.200c-1 .6-1.500 1.300-1.500 2.800"/><circle cx="12" cy="18.500" r=".7" fill="#3a3a3a"/></svg>
<svg style="left:1875px;top:470px" width="25" height="24" viewBox="0 0 25 24" fill="none" stroke="#3a3a3a" stroke-width="1.600"><path d="M10 22H3V10M1 5l2-4h17l2 4c0 2-1.500 3.500-3.500 3.500S15 7 15 5c0 2-1.500 3.500-3.500 3.500S8 7 8 5c0 2-1.500 3.500-3.500 3.500S1 7 1 5z"/><path d="M13 21c0-5 3-8 5-9 2 4 0 8-5 9zM18 22c1-3 3-5 6-5 0 3-2 5-6 5z"/></svg>
<svg style="left:1876px;top:522px" width="22" height="26" viewBox="0 0 22 26" fill="none" stroke="#3a3a3a" stroke-width="1.600"><path d="M11 1a10 10 0 0 0-6 18v3a3 3 0 0 0 3 3h6a3 3 0 0 0 3-3v-3a10 10 0 0 0-6-18z"/><path d="M12 6l-4 7h6l-4 7"/></svg>
<svg style="left:1875px;top:945px" width="25" height="9" viewBox="0 0 25 9" fill="none" stroke="#3a3a3a" stroke-width="1.600"><circle cx="3.500" cy="4.500" r="2.500"/><circle cx="12.500" cy="4.500" r="2.500"/><circle cx="21.500" cy="4.500" r="2.500"/></svg>

<!--STATUS-->
<!-- status bar -->
<div class="t" style="left:14px;top:991px;font-size:18px;color:#3a3a3a;letter-spacing:.500px">页面: 1/43</div>
<div class="t" style="left:121px;top:991px;font-size:18px;color:#3a3a3a;letter-spacing:.500px">字数: 11285</div>
<div class="a" style="left:229px;top:983px;width:126px;height:33px;background:#f1f2f6"></div>
<svg style="left:235px;top:987px" width="23" height="24" viewBox="0 0 23 24" fill="none" stroke="#3a3a3a" stroke-width="1.600"><path d="M1 1h21v18h-7.500l-3 3.500-3-3.500H1z"/><path d="M6 9.500l4 4.500 7-8"/></svg>
<div class="t" style="left:262px;top:990px;font-size:18px;color:#3a3a3a">拼写检查</div>
<svg style="left:341px;top:997px" width="7" height="4" viewBox="0 0 7 4"><path d="M0 0h7L3.500 4z" fill="#8a8a8c"/></svg>

<svg style="left:370px;top:987px" width="23" height="24" viewBox="0 0 23 24" fill="none" stroke="#3a3a3a" stroke-width="1.600"><path d="M1 1h21v18h-7.500l-3 3.500-3-3.500H1z"/><path d="M7.500 6l8 8M15.500 6l-8 8"/></svg>
<div class="t" style="left:398px;top:990px;font-size:18px;color:#3a3a3a">文档校对</div>
<div class="t" style="left:498px;top:991px;font-size:18px;color:#3a3a3a">兼容模式</div>
<svg style="left:596px;top:988px" width="26" height="22" viewBox="0 0 26 22"><path d="M1 4V1h14v3M8 1v19M4.500 20.500h7" fill="none" stroke="#3a3a3a" stroke-width="1.600"/><text x="15" y="20" font-size="16" fill="#3a3a3a" font-family="Liberation Sans, sans-serif">?</text></svg>
<div class="t" style="left:625px;top:991px;font-size:18px;color:#3a3a3a">缺失字体</div>
<!-- right status -->
<svg style="left:1204px;top:987px" width="28" height="24" viewBox="0 0 28 24" fill="none" stroke="#3a3a3a" stroke-width="1.600"><path d="M2 14.500Q14 2 26 14.500 14 27 2 14.500z"/><circle cx="14" cy="14.500" r="4.200"/><path d="M14 1v3.500M5 3.500l2 3M23 3.500l-2 3"/></svg>
<div class="a" style="left:1245px;top:988px;width:1px;height:24px;background:#e3e3e7"></div>
<div class="a" style="left:1257px;top:982px;width:35px;height:34px;background:#e3e3e8"></div>
<svg style="left:1264px;top:987px" width="22" height="24" viewBox="0 0 22 24" fill="none" stroke="#3a3a3a" stroke-width="1.600"><path d="M1 4a3 3 0 0 1 3-3h11l6 6v13a3 3 0 0 1-3 3H4a3 3 0 0 1-3-3z"/><path d="M6 8h10M6 13h10M6 18h10"/></svg>
<svg style="left:1304px;top:988px" width="22" height="22" viewBox="0 0 22 22" fill="none" stroke="#3a3a3a" stroke-width="1.600"><path d="M0 1.500h21M6 8h15M6 14.500h15M0 21h21"/><circle cx="1.500" cy="8" r=".8"/><circle cx="1.500" cy="14.500" r=".8"/></svg>
<svg style="left:1340px;top:988px" width="24" height="23" viewBox="0 0 24 23" fill="none" stroke="#3a3a3a" stroke-width="1.600"><path d="M12 4.500C9.500 2 5 1.500 1 2v16c4-.5 8.500 0 11 4 2.500-4 7-4.500 11-4V2c-4-.5-8.500 0-11 2.500zM12 4.500V22"/></svg>
<svg style="left:1380px;top:988px" width="23" height="23" viewBox="0 0 23 23" fill="none" stroke="#3a3a3a" stroke-width="1.600"><circle cx="11.500" cy="11.500" r="10.500"/><ellipse cx="11.500" cy="11.500" rx="4.800" ry="10.500"/><path d="M1 11.500h21M2.500 6h18M2.500 17h18"/></svg>
<svg style="left:1419px;top:987px" width="26" height="24" viewBox="0 0 26 24" fill="none" stroke="#3a3a3a" stroke-width="1.600"><path d="M17 1.500l5.500 4-11 14-6.500 2 1-6.500zM14.500 5l5.500 4M0 23h19"/></svg>
<div class="a" style="left:1460px;top:988px;width:1px;height:24px;background:#e3e3e7"></div>
<svg style="left:1478px;top:988px" width="22" height="22" viewBox="0 0 22 22" fill="none" stroke="#3a3a3a" stroke-width="1.600"><path d="M1 6V1h5M16 1h5v5M21 16v5h-5M6 21H1v-5"/><rect x="5.500" y="5.500" width="11" height="11"/></svg>
<div class="t" style="left:1512px;top:990px;font-size:19px;color:#6a6a70">70%</div>
<svg style="left:1557px;top:997px" width="7" height="4" viewBox="0 0 7 4"><path d="M0 0h7L3.500 4z" fill="#8a8a8c"/></svg>

<div class="a" style="left:1583px;top:998px;width:15px;height:2.500px;background:#3a3a3a"></div>
<div class="a" style="left:1616px;top:999px;width:60px;height:1.500px;background:#555"></div>
<div class="a" style="left:1692px;top:999px;width:132px;height:1px;background:#d8d8dc"></div>
<div class="a" style="left:1718px;top:995px;width:1px;height:8px;background:#d0d0d4"></div>
<div class="a" style="left:1674px;top:990px;width:19px;height:19px;border:1.600px solid #555;border-radius:50%;background:#fff"></div>
<svg style="left:1840px;top:991px" width="16" height="16" viewBox="0 0 16 16"><path d="M8 0v16M0 8h16" stroke="#3a3a3a" stroke-width="2.400"/></svg>
<svg style="left:1874px;top:988px" width="23" height="23" viewBox="0 0 23 23" fill="none" stroke="#3a3a3a" stroke-width="1.600"><path d="M1 7V1h6M1 1l6.500 6.500M16 1h6v6M22 1l-6.500 6.500M22 16v6h-6M22 22l-6.500-6.500M7 22H1v-6M1 22l6.500-6.500"/></svg>

<!--TASKBAR-->
<!-- taskbar left -->
<svg style="left:24px;top:1037px" width="25" height="26" viewBox="0 0 25 26" fill="#fff"><path d="M0 3.500 10.500 2v10.500H0zM12 1.800 25 0v12.500H12zM0 14h10.500v10.500L0 23zM12 14h13v12L12 24.200z"/></svg>
<svg style="left:94px;top:1033px" width="33" height="33" viewBox="0 0 33 33"><g fill="#fbfbfd"><circle cx="9" cy="9" r="8.800"/><circle cx="24" cy="9" r="8.800"/><circle cx="24" cy="24" r="8.800"/><circle cx="9" cy="24" r="8.800"/><rect x="8" y="8" width="17" height="17"/></g><g fill="none" stroke="#222c3d" stroke-width="2" stroke-linecap="round"><path id="fsw" d="M15 1.500Q8.500 10 16.500 16.500"/><use href="#fsw" transform="rotate(90 16.500 16.500)"/><use href="#fsw" transform="rotate(180 16.500 16.500)"/><use href="#fsw" transform="rotate(270 16.500 16.500)"/></g></svg>
<div class="a" style="left:150px;top:1028px;width:205px;height:43px;background:#eef0f3"></div>
<svg style="left:158px;top:1037px" width="24" height="25" viewBox="0 0 24 25"><path d="M19.500 16.500A8 8 0 1 1 20 12.500H6" fill="none" stroke="#2d8fe8" stroke-width="4.200"/><path d="M2 21Q1 12 9 5T22 3" fill="none" stroke="#6ab8f2" stroke-width="1.600"/></svg>
<svg style="left:184px;top:1047px" width="7" height="5" viewBox="0 0 7 5"><path d="M0 5h7L3.500 0z" fill="#a8a8ac"/></svg>
<div class="t" style="left:200px;top:1042px;font-size:15px;color:#222">平板电脑排行榜</div>
<div class="a" style="left:355px;top:1028px;width:70px;height:43px;background:#2d8cf0"></div>
<div class="t" style="left:360px;top:1042px;font-size:15px;color:#fff">搜索一下</div>
<div class="a" style="left:437px;top:1033px;width:1px;height:34px;background:#3d4656"></div>
<div class="a" style="left:440px;top:1033px;width:1px;height:34px;background:#3d4656"></div>
<!-- IE -->
<svg style="left:476px;top:1031px" width="38" height="37" viewBox="0 0 38 37"><ellipse cx="17.500" cy="17.500" rx="21" ry="9.500" transform="rotate(-42 17.500 17.500)" fill="none" stroke="#f0c62a" stroke-width="2.800"/><circle cx="21.500" cy="20.500" r="14" fill="#273042"/><path d="M31.800 26.500A11.500 11.500 0 1 1 33 20.500H13" fill="none" stroke="#3fbdf2" stroke-width="6.500"/><path d="M31 25.500A11 11 0 0 1 12 27.500" fill="none" stroke="#2aa2e2" stroke-width="3.500"/><path d="M1.800 30.500Q-.5 26 5.500 17.500" fill="none" stroke="#f0c62a" stroke-width="2.800"/></svg>
<!-- 360 -->
<svg style="left:553px;top:1031px" width="36" height="37" viewBox="0 0 36 37"><circle cx="17" cy="19" r="15" fill="#62c431" stroke="#f2faee" stroke-width="1.800"/><path d="M22.500 24.500A6.500 6.500 0 1 1 23.500 19.500H11.500" fill="none" stroke="#fff" stroke-width="4.200"/><path d="M3.500 35Q4 22 14 11T31 3" fill="none" stroke="#6fcf3c" stroke-width="2"/></svg>
<!-- explorer -->
<svg style="left:629px;top:1036px" width="33" height="27" viewBox="0 0 33 27"><path d="M0 1.500A1.500 1.500 0 0 1 1.500 0h11l3 3H0z" fill="#e6a21e"/><path d="M0 3h14l2-1h15.500A1.500 1.500 0 0 1 33 3.500V25.500a1 1 0 0 1-1 1H1a1 1 0 0 1-1-1z" fill="#fcd565"/><path d="M5 27V16.500a2 2 0 0 1 2-2h19a2 2 0 0 1 2 2V27h-7v-7h-9v7z" fill="#3b98e6"/><path d="M5 18v-1.500a2 2 0 0 1 2-2h19a2 2 0 0 1 2 2V18z" fill="#5cb4f2"/></svg>
<div class="a" style="left:615px;top:1077px;width:61px;height:3px;background:#76b9ed"></div>
<div class="a" style="left:684px;top:1020px;width:73px;height:60px;background:#525d6f"></div>
<div class="a" style="left:684px;top:1077px;width:73px;height:3px;background:#8ac4f0"></div>
<svg style="left:702px;top:1032px" width="37" height="37" viewBox="0 0 80 80">
<circle cx="40" cy="40" r="40" fill="#fa7d0c"/><circle cx="40" cy="40" r="33" fill="#cf3d10"/>
<path d="M13 14.500 26 19 17.500 28z" fill="#fff" stroke="#000" stroke-width="1.500"/><path d="M64.500 14.500 53.500 19 61 28z" fill="#fff" stroke="#000" stroke-width="1.500"/>
<ellipse cx="40" cy="36" rx="23.500" ry="19.500" fill="#050505"/>
<path d="M15.500 33q4-5.500 12-5.500 8 0 12.500 4 4.500-4 12.500-4 8 0 11 5.500-3 5-11 5-8 0-12.500-3.500-4.500 3.500-12.500 3.500-8 0-12-5z" fill="#fff"/>
<ellipse cx="27.500" cy="33" rx="7" ry="3.500" fill="#f9780e"/><ellipse cx="52" cy="33" rx="7" ry="3.500" fill="#f9780e"/>
<rect x="31" y="57" width="16" height="12.500" rx="3" fill="#0a0a0a"/><text x="39" y="67" font-size="10" font-weight="700" fill="#fff" text-anchor="middle" font-family="Liberation Sans, sans-serif">K</text>
</svg>
<!-- WPS -->
<svg style="left:776px;top:1037px" width="37" height="27" viewBox="0 0 37 27"><defs><linearGradient id="wpg" x1="0" y1="1" x2="1" y2="0"><stop offset="0" stop-color="#ff5a22"/><stop offset="1" stop-color="#f8741e"/></linearGradient></defs><path d="M.8 1.200 2 0h15.500l.8 1.200L14 13l2 13.500H9.900z" fill="#f6251f"/><path d="M26.600 0H36l.6 1.200-8.200 25.300h-8.500L17.500 15 21 6z" fill="#f82d12"/><path d="M7.900 5.200h8l-2.600 10z" fill="#2b3546"/><path d="M23 6h6.500L24 15.600z" fill="#2b3546"/><path d="M9.900 26.500h6.300L26.600 0H21z" fill="url(#wpg)"/></svg>
<div class="a" style="left:765px;top:1077px;width:61px;height:3px;background:#76b9ed"></div>


<!-- taskbar right -->
<svg style="left:982px;top:1036px" width="36" height="32" viewBox="0 0 36 32"><circle cx="24" cy="10" r="8" fill="#f6b73c"/><path d="M8 26a7 7 0 0 1 1-14 9.500 9.500 0 0 1 18 1.500 6.500 6.500 0 0 1-1 12.500z" fill="#e8e9ec"/><path d="M10 26a5 5 0 0 1 0-10 8 8 0 0 1 15 2 4 4 0 0 1 0 8z" fill="#fbfbfc"/><circle cx="28" cy="27" r="4.500" fill="#e8203c"/></svg>
<div class="t" style="left:1027px;top:1039px;font-size:21px;color:#fff">28°C</div>
<div class="t" style="left:1087px;top:1039px;font-size:21px;color:#fff">多云</div>
<div class="t" style="left:1050px;top:1028px;font-size:18px;color:#fff">56%</div>
<div class="t" style="left:1032px;top:1054px;font-size:18px;color:#fff">内存占用</div>
<!-- tray -->
<svg style="left:1151px;top:1037px" width="25" height="25" viewBox="0 0 80 80"><circle cx="40" cy="40" r="40" fill="#f20d0d"/><path d="M13 16.500 27 21 18 31z" fill="#fff"/><path d="M65 16.500 52 21 61 31z" fill="#fff"/><ellipse cx="40" cy="38" rx="24" ry="20" fill="#0a0a0a"/><path d="M15.500 35q4-5.500 12-5.500 8 0 12.500 4 4.500-4 12.500-4 8 0 11 5.500-3 5-11 5-8 0-12.500-3.500-4.500 3.500-12.500 3.500-8 0-12-5z" fill="#fff"/><ellipse cx="27.500" cy="35" rx="7" ry="3.500" fill="#f9a050"/><ellipse cx="52" cy="35" rx="7" ry="3.500" fill="#f9a050"/><rect x="34" y="60" width="12" height="7" rx="1.500" fill="#ddd"/></svg>
<svg style="left:1189px;top:1036px" width="22" height="28" viewBox="0 0 22 28"><rect x="4" y="0" width="14" height="9" fill="#c9ccd2"/><rect x="6.500" y="2.500" width="3.500" height="4" fill="#444"/><rect x="12" y="2.500" width="3.500" height="4" fill="#444"/><rect x="0" y="8" width="22" height="19" rx="5" fill="#3a9be0"/><path d="M11 11v12M11 17l-4-2v-2M11 19l4-2v-2" stroke="#1c5f9c" stroke-width="1.500" fill="none"/></svg>
<svg style="left:1224px;top:1038px" width="26" height="26" viewBox="0 0 26 26"><rect x="0" y="0" width="23" height="23" rx="3" fill="#2e8fe6"/><path d="M6 5l3 3v6c0 3 2 4 4 4h3" stroke="#fff" stroke-width="3" fill="none"/><path d="M17 5l-3 3" stroke="#fff" stroke-width="3"/><circle cx="19.500" cy="19.500" r="6" fill="#2bb24c"/><path d="M16.500 19.500l2.300 2.300 4-4.300" stroke="#fff" stroke-width="1.800" fill="none"/></svg>
<svg style="left:1260px;top:1038px" width="24" height="26" viewBox="0 0 24 26"><path d="M12 0C8 2.500 4 3 0 3v9c0 7 5 11 12 14 7-3 12-7 12-14V3c-4 0-8-.5-12-3z" fill="#2a7be4"/><path d="M12 3C9 5 6 5.500 3 5.500V12c0 5 3.500 8.500 9 11 5.500-2.500 9-6 9-11V5.500C18 5.500 15 5 12 3z" fill="#fff"/><path d="M5 9l7 7 7-7v3l-7 7-7-7z" fill="#2a7be4"/></svg>
<svg style="left:1298px;top:1039px" width="24" height="23" viewBox="0 0 24 23" fill="none" stroke="#e8e8ea" stroke-width="1.700"><path d="M2 22A20 20 0 0 1 22 2M7 22A15 15 0 0 1 22 7M12 22a10 10 0 0 1 10-10" /><circle cx="20" cy="20" r="1.800" fill="#fff" stroke="none"/></svg>
<svg style="left:1333px;top:1038px" width="23" height="25" viewBox="0 0 23 25" fill="#fff"><path d="M11.500 0a2 2 0 0 1 2 2 7.500 7.500 0 0 1 5.500 7.500v6l3 3.500v1H1v-1l3-3.500v-6A7.500 7.500 0 0 1 9.500 2a2 2 0 0 1 2-2z"/><path d="M8.500 22h6a3 3 0 0 1-6 0z"/></svg>
<svg style="left:1368px;top:1038px" width="25" height="25" viewBox="0 0 25 25"><rect width="25" height="25" fill="#3a4a2c"/><path d="M3 12.500C6 7 12 5.500 22 6v13C12 19.500 6 18 3 12.500z" fill="#76b21c"/><path d="M8 12.500c1.500-2.500 4-3.500 7-3v7c-3 .5-5.500-1-7-4z" fill="#3a4a2c"/></svg>
<svg style="left:1404px;top:1038px" width="22" height="25" viewBox="0 0 22 25"><ellipse cx="11" cy="13" rx="8.500" ry="11" fill="#111"/><ellipse cx="11" cy="17" rx="5.500" ry="6.500" fill="#fff"/><ellipse cx="8.500" cy="7.500" rx="1.600" ry="2.300" fill="#fff"/><ellipse cx="13.500" cy="7.500" rx="1.600" ry="2.300" fill="#fff"/><ellipse cx="11" cy="11.300" rx="3.200" ry="1.200" fill="#f5a623"/><path d="M3.500 13.500q7.500 3.500 15 0l.5 2.500q-8 3.500-16 0z" fill="#e02020"/><ellipse cx="6" cy="23.500" rx="4" ry="1.500" fill="#f5a623"/><ellipse cx="16" cy="23.500" rx="4" ry="1.500" fill="#f5a623"/><path d="M2.500 12Q0 16 1 19l2.500-2zM19.500 12q2.500 4 1.500 7l-2.500-2z" fill="#111"/></svg><svg style="left:1440px;top:1038px" width="22" height="25" viewBox="0 0 22 25"><ellipse cx="11" cy="13" rx="8.500" ry="11" fill="#111"/><ellipse cx="11" cy="17" rx="5.500" ry="6.500" fill="#fff"/><ellipse cx="8.500" cy="7.500" rx="1.600" ry="2.300" fill="#fff"/><ellipse cx="13.500" cy="7.500" rx="1.600" ry="2.300" fill="#fff"/><ellipse cx="11" cy="11.300" rx="3.200" ry="1.200" fill="#f5a623"/><path d="M3.500 13.500q7.500 3.500 15 0l.5 2.500q-8 3.500-16 0z" fill="#e02020"/><ellipse cx="6" cy="23.500" rx="4" ry="1.500" fill="#f5a623"/><ellipse cx="16" cy="23.500" rx="4" ry="1.500" fill="#f5a623"/><path d="M2.500 12Q0 16 1 19l2.500-2zM19.500 12q2.500 4 1.500 7l-2.500-2z" fill="#111"/></svg>
<svg style="left:1475px;top:1040px" width="26" height="20" viewBox="0 0 26 20" fill="none" stroke="#f0f0f2" stroke-width="1.600"><rect x="6" y="4" width="18" height="13" rx="1"/><path d="M24.500 8v5" stroke-width="2"/><path d="M3 1v4M7 1v4M1.500 5h7v3a3.500 3.500 0 0 1-7 0zM5 11.500V15h2" /><rect x="8" y="6" width="14" height="9" fill="#f0f0f2" stroke="none"/></svg>
<svg style="left:1514px;top:1037px" width="19" height="27" viewBox="0 0 19 27"><ellipse cx="9.500" cy="13.500" rx="9.500" ry="13.500" fill="#1f86e8"/><path d="M5 8.500l9 9-4.500 4.500v-17L14 9.500l-9 9" fill="none" stroke="#fff" stroke-width="1.700"/></svg>
<svg style="left:1552px;top:1037px" width="22" height="29" viewBox="0 0 22 29" fill="none" stroke="#f0f0f2" stroke-width="1.500"><rect x="3.500" y="1" width="9" height="6"/><rect x="1" y="7" width="14" height="19" rx="2"/><path d="M6 3.500h1M9 3.500h1M13 23l3 3 5-6" stroke="#a8a8ac"/></svg>
<svg style="left:1583px;top:1038px" width="25" height="25" viewBox="0 0 25 25"><circle cx="12.500" cy="12.500" r="12.500" fill="#f2d424"/><path d="M0 12.500a12.500 12.500 0 0 0 3 8q5-5 10-3t9-2a12.500 12.500 0 0 0 3-3 12.500 12.500 0 0 1-25 0z" fill="#3cab3c"/><path d="M3 5q5-2 9 1t10-1" stroke="#3cab3c" stroke-width="2.500" fill="none"/><path d="M12.500 7.500v10M7.500 12.500h10" stroke="#1f9a2f" stroke-width="3"/></svg>
<svg style="left:1620px;top:1039px" width="25" height="23" viewBox="0 0 25 23" fill="none" stroke="#f0f0f2" stroke-width="1.500"><path d="M1 7.500h4.500L12 1.500v20L5.500 15.500H1z"/><path d="M15 8q2.500 3.500 0 7" /><path d="M18 5q5 6.500 0 13" stroke="#9a9a9e"/><path d="M21 2.500q7 9 0 18" stroke="#6a6a6e"/></svg>
<div class="t" style="left:1657px;top:1040px;font-size:19px;color:#fff;font-weight:500">中</div>
<svg style="left:1697px;top:1038px" width="26" height="25" viewBox="0 0 26 25"><rect width="26" height="25" rx="5" fill="#3b8cf2"/><circle cx="12" cy="11.500" r="6" fill="none" stroke="#fff" stroke-width="2.500"/><path d="M15.500 15.500l3 3.500" stroke="#fff" stroke-width="2.500"/><circle cx="20" cy="19" r="2" fill="#45d07a"/></svg>
<div class="t" style="left:1751px;top:1028px;font-size:18px;color:#fff;letter-spacing:.300px">11:35 周二</div>
<div class="t" style="left:1748px;top:1052px;font-size:18px;color:#fff;letter-spacing:1.300px">2022/9/13</div>
<svg style="left:1869px;top:1038px" width="25" height="22" viewBox="0 0 25 22"><path d="M0 0h24v20H8l-4 2v-2H0z" fill="#fff"/><path d="M9 5l8 5-8 5z" fill="#111"/></svg>
<div class="a" style="left:1885px;top:1050px;width:19px;height:19px;background:#e81123"></div>
<div class="t" style="left:1890px;top:1053px;font-size:13px;color:#fff;font-family:'Liberation Sans',sans-serif">3</div>
<div class="a" style="left:1912px;top:1020px;width:1px;height:60px;background:#5a5c62"></div>
<!--WIDGETS-->
<!-- floating perf widget -->
<div class="a" style="left:1740px;top:186px;width:150px;height:64px;background:#33353f;border-radius:32px;box-shadow:0 0 4px rgba(40,40,50,.5)"></div>
<div class="a" style="left:1838px;top:175px;width:84px;height:84px;background:#515769;border-radius:50%;box-shadow:0 0 3px rgba(40,40,50,.5)"></div>
<svg style="left:1838px;top:175px" width="84" height="84" viewBox="0 0 84 84"><defs><linearGradient id="arc" x1="0" y1="0" x2="0" y2="1"><stop offset="0" stop-color="#36b7a2"/><stop offset=".5" stop-color="#62c88c"/><stop offset="1" stop-color="#ccdb3c"/></linearGradient></defs><path d="M42 5a37 37 0 1 1-14 71.200" fill="none" stroke="url(#arc)" stroke-width="2"/></svg>
<div class="t" style="left:1849px;top:193px;font-size:41px;color:#b9bec9;font-weight:300;font-family:'Noto Sans CJK SC',sans-serif;letter-spacing:-1px">56</div>
<div class="t" style="left:1890px;top:219px;font-size:10px;color:#c6cad4;font-family:'Liberation Sans',sans-serif">%</div>
<div class="a" style="left:1760px;top:197px;width:7px;height:7px;background:#3d8fd1"></div>
<div class="a" style="left:1760px;top:228px;width:7px;height:8px;background:#2e8b3b"></div>
<div class="t" style="left:1789px;top:194px;font-size:15px;font-weight:700;color:#e6e7ee;font-family:'Liberation Sans',sans-serif">0<span style="font-size:8px;color:#8e909c;font-weight:400"> K/s</span></div>
<div class="t" style="left:1776px;top:227px;font-size:15px;font-weight:700;color:#e6e7ee;font-family:'Liberation Sans',sans-serif">0.5<span style="font-size:8px;color:#8e909c;font-weight:400"> K/s</span></div>
<!-- left floating bar -->
<div class="a" style="left:3px;top:8px;width:12px;height:87px;border-radius:6px;background:linear-gradient(180deg,#2a3a66 0,#2a3a66 42%,#666868 43%,#666868 80%,#4f6b56 81%,#4f6b56 100%);box-shadow:0 0 0 1px rgba(255,255,255,.35)"></div>
<div class="a" style="left:5px;top:80px;width:8px;height:1px;background:#8fc79a;box-shadow:0 3.500px 0 #8fc79a,0 7px 0 #8fc79a,0 10.500px 0 #8fc79a"></div>

</body>
</html>
